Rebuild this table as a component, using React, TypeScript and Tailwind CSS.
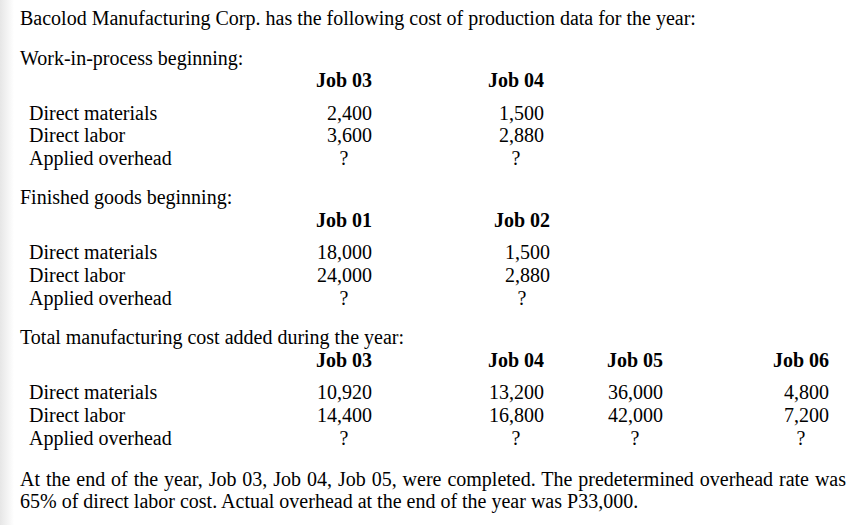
const serif = { fontFamily: '"Liberation Serif", "Times New Roman", serif' };

type Cell = string;

function Row({
  cols,
  label,
  cells,
  bold,
  tall,
}: {
  cols: string;
  label?: string;
  cells: Cell[];
  bold?: boolean;
  tall?: boolean;
}) {
  return (
    <div className={`grid items-center ${tall ? "h-[23px]" : "h-[22.5px]"} ${cols} ${bold ? "font-bold" : ""}`}>
      <div className="pl-[9px] whitespace-nowrap">{label}</div>
      {cells.map((c, i) =>
        c === "" ? (
          <div key={i} />
        ) : (
          <div key={i} className={`whitespace-nowrap ${c === "?" ? "text-center" : "text-right"}`}>
            {c}
          </div>
        )
      )}
    </div>
  );
}

const topCols = "grid-cols-[296px_56px_116px_56px]";
const fgCols = "grid-cols-[296px_56px_122px_56px]";
const botCols = "grid-cols-[296px_56px_116px_56px_63px_56px_110px_56px]";

export default function App() {
  return (
    <div
      className="w-[863px] h-[525px] overflow-hidden bg-[linear-gradient(to_right,#e6e6e6,#ffffff_14px)] text-black text-[20px] leading-[22.5px] pl-[20px] pt-[7px]"
      style={serif}
    >
      <p className="h-[22.5px] whitespace-nowrap">
        Bacolod Manufacturing Corp. has the following cost of production data for the year:
      </p>

      <p className="h-[22.5px] mt-[17px] whitespace-nowrap">Work-in-process beginning:</p>
      <Row cols={topCols} bold cells={["Job 03", "", "Job 04"]} />
      <div className="mt-[10px]">
        <Row cols={topCols} label="Direct materials" cells={["2,400", "", "1,500"]} />
        <Row cols={topCols} label="Direct labor" cells={["3,600", "", "2,880"]} />
        <Row cols={topCols} label="Applied overhead" cells={["?", "", "?"]} />
      </div>

      <p className="h-[23px] mt-[17px] leading-[23px] whitespace-nowrap">Finished goods beginning:</p>
      <Row cols={fgCols} tall bold cells={["Job 01", "", "Job 02"]} />
      <div className="mt-[9px]">
        <Row cols={fgCols} tall label="Direct materials" cells={["18,000", "", "1,500"]} />
        <Row cols={fgCols} tall label="Direct labor" cells={["24,000", "", "2,880"]} />
        <Row cols={fgCols} tall label="Applied overhead" cells={["?", "", "?"]} />
      </div>

      <p className="h-[23px] mt-[16px] leading-[23px] whitespace-nowrap">
        Total manufacturing cost added during the year:
      </p>
      <Row cols={botCols} tall bold cells={["Job 03", "", "Job 04", "", "Job 05", "", "Job 06"]} />
      <div className="mt-[9px]">
        <Row cols={botCols} tall label="Direct materials" cells={["10,920", "", "13,200", "", "36,000", "", "4,800"]} />
        <Row cols={botCols} tall label="Direct labor" cells={["14,400", "", "16,800", "", "42,000", "", "7,200"]} />
        <Row cols={botCols} tall label="Applied overhead" cells={["?", "", "?", "", "?", "", "?"]} />
      </div>

      <p className="mt-[18px] w-[826px] text-justify leading-[22px]">
        At the end of the year, Job 03, Job 04, Job 05, were completed. The predetermined overhead rate was 65% of
        direct labor cost. Actual overhead at the end of the year was P33,000.
      </p>
    </div>
  );
}
